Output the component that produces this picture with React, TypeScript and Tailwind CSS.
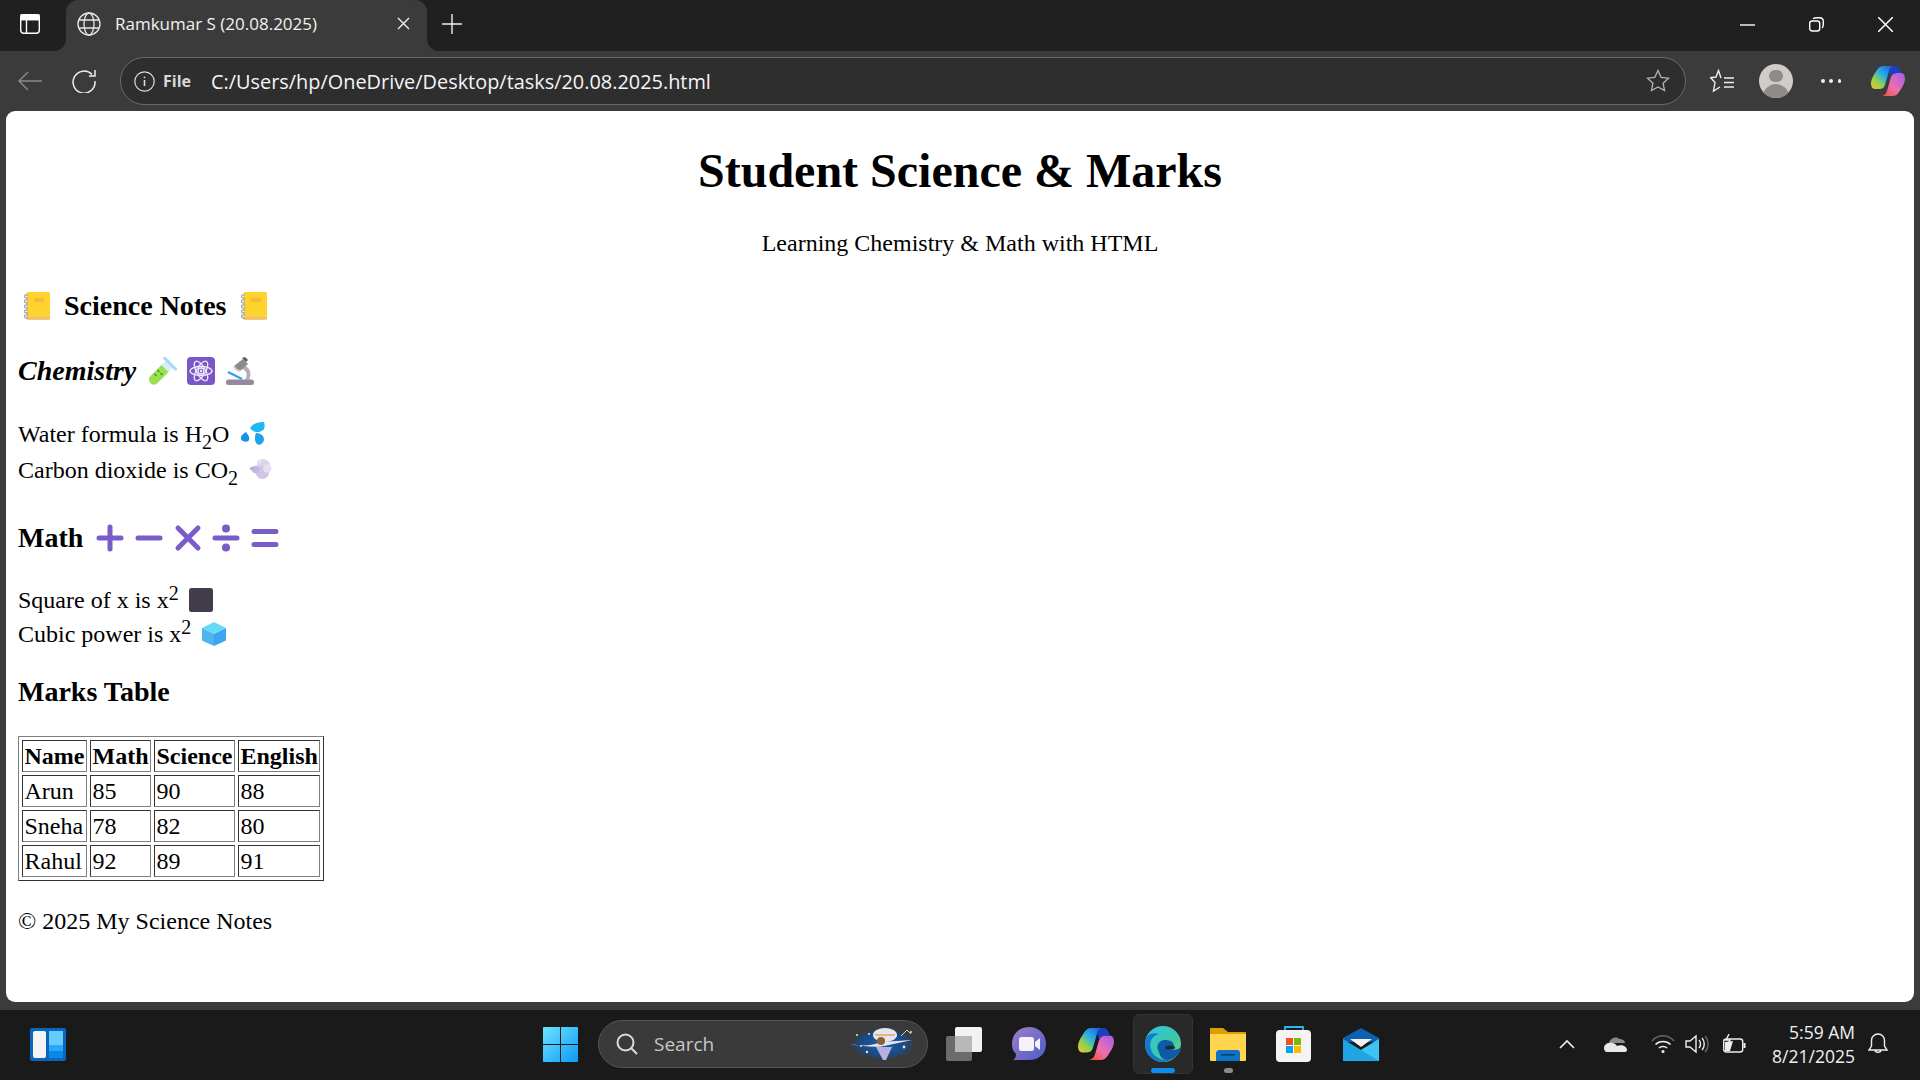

import React from "react";

const ui = { fontFamily: '"Open Sans", "Noto Sans", sans-serif' };
const serif = { fontFamily: '"Liberation Serif", serif' };

function Copilot({ s = 34, id }: { s?: number; id: string }) {
  return (
    <svg width={s} height={s} viewBox="0 0 34 32" className="shrink-0">
      <defs>
        <linearGradient id={id + "a"} x1="0" y1="1" x2="1" y2="0">
          <stop offset="0" stopColor="#f7c32e" /><stop offset=".3" stopColor="#8fd14f" /><stop offset=".55" stopColor="#27b0e8" /><stop offset="1" stopColor="#1a4fd8" />
        </linearGradient>
        <linearGradient id={id + "b"} x1="0" y1="1" x2="1" y2="0">
          <stop offset="0" stopColor="#f0502a" /><stop offset=".45" stopColor="#ee6fb0" /><stop offset="1" stopColor="#a45ce8" />
        </linearGradient>
      </defs>
      <path d="M12 1H24C21 1 19 3 18 6L14 20C13 23 11 24 8 24H4C1 24 0 21 0 18 0 15 2 11 4 8L6 5C8 2 10 1 12 1z" fill={"url(#" + id + "a)"} />
      <path d="M22 31H10C13 31 15 29 16 26L20 12C21 9 23 8 26 8H30C33 8 34 11 34 14 34 17 32 21 30 24L28 27C26 30 24 31 22 31z" fill={"url(#" + id + "b)"} />
      <path d="M18 6C19 3 21 1 24 1c3 0 5 3 6 7h-4c-3 0-5 1-6 4z" fill="#1a3fc8" />
    </svg>
  );
}

function Notebook() {
  return (
    <svg width="26" height="28" viewBox="0 0 26 28" className="inline-block align-[-5px]">
      <rect x="2.500" y="0" width="23.500" height="28" rx="1.500" fill="#ffd32e" />
      <rect x="2.500" y="25" width="23.500" height="2" fill="#e8b8a0" />
      <rect x="10" y="6" width="10" height="4" rx="1" fill="#f8b83a" />
      {[3, 8, 13, 18, 23].map((y) => (
        <path key={y} d={`M4 ${y}C-1 ${y - 1} -1 ${y + 3} 4 ${y + 3}`} fill="none" stroke="#a9a7b2" strokeWidth="1.4" />
      ))}
    </svg>
  );
}
function Tube() {
  return (
    <svg width="29" height="28" viewBox="0 0 28 28" className="inline-block align-[-5px]">
      <path d="M18 3 25 10 9 26c-2 2-5 2-7 0s-2-5 0-7z" fill="#d8eef8" />
      <path d="M13 8 20 15 9 26c-2 2-5 2-7 0s-2-5 0-7z" fill="#9ae04c" />
      <path d="M16 1 27 12" stroke="#a9d9f2" strokeWidth="3" strokeLinecap="round" />
      <path d="M9 13l2 2M12 16l2 2M6 17l2 2" stroke="#3f8f54" strokeWidth="1.4" />
    </svg>
  );
}
function Atom() {
  return (
    <svg width="28" height="28" viewBox="0 0 28 28" className="inline-block align-[-5px]">
      <rect width="28" height="28" rx="4" fill="#7a58c4" />
      <g fill="none" stroke="#efe8fb" strokeWidth="1.3">
        <ellipse cx="14" cy="14" rx="11" ry="4.5" />
        <ellipse cx="14" cy="14" rx="11" ry="4.5" transform="rotate(60 14 14)" />
        <ellipse cx="14" cy="14" rx="11" ry="4.5" transform="rotate(120 14 14)" />
        <circle cx="14" cy="14" r="3" />
      </g>
      <circle cx="14" cy="14" r="1.3" fill="#efe8fb" />
    </svg>
  );
}
function Microscope() {
  return (
    <svg width="28" height="28" viewBox="0 0 28 28" className="inline-block align-[-5px]">
      <rect y="22.500" width="28" height="5.500" rx="2.500" fill="#98889f" />
      <path d="M17 8c7 2 9 8 6 15h-4c3-5 2-9-3-11z" fill="#b3adb8" />
      <path d="M8 9 17 2l5 5-8 7c-2 1-5-2-6-5z" fill="#8e8a90" />
      <path d="M16 1l3-1 3 3-2 2z" fill="#5c5a60" />
      <path d="M2 15l14 7" stroke="#35a3ea" strokeWidth="2.400" />
      <path d="M8 9c0 2 3 5 6 5" fill="none" stroke="#d7d3da" strokeWidth="2" />
    </svg>
  );
}
function Drops() {
  return (
    <svg width="24" height="24" viewBox="0 0 24 24" className="inline-block align-[-4px] ml-[6px]">
      <path d="M9 6C12 1 18 0 23 0c1 3 1 6-1 8-3 3-10 3-13-2z" fill="#1fb8f2" />
      <path d="M5 10c2 3 4 5 3 8-1 3-7 2-8-1-1-3 2-5 5-7z" fill="#1594e6" />
      <path d="M15 11c4 0 8 2 8 7-1 4-5 6-7 4s-3-6-1-11z" fill="#1ba4ec" />
    </svg>
  );
}
function Puff() {
  return (
    <svg width="23" height="23" viewBox="0 0 24 24" className="inline-block align-[-3px] ml-[5px]">
      <g fill="#dcd4ec">
        <circle cx="15" cy="8" r="7" />
        <circle cx="14" cy="15" r="7" fill="#cfc6e6" />
        <circle cx="7" cy="12" r="4" fill="#c3b8e2" />
        <circle cx="3" cy="11" r="2" fill="#b9aadd" />
        <circle cx="19" cy="11" r="4.5" fill="#e4e0ec" />
        <circle cx="11" cy="4" r="2.5" fill="#e5e0ef" />
      </g>
    </svg>
  );
}
function Sym({ d, dots }: { d: string; dots?: boolean }) {
  return (
    <svg width="28" height="28" viewBox="0 0 28 28" className="shrink-0">
      <path d={d} stroke="#7a5cc8" strokeWidth="5" strokeLinecap="round" fill="none" />
      {dots && (<><circle cx="14" cy="4.5" r="4" fill="#7a5cc8" /><circle cx="14" cy="23.5" r="4" fill="#7a5cc8" /></>)}
    </svg>
  );
}
function SquareE() {
  return (
    <svg width="24" height="24" viewBox="0 0 24 24" className="inline-block align-[-4px] ml-[4px]">
      <rect width="24" height="24" rx="2.5" fill="#433d4b" />
    </svg>
  );
}
function Cube() {
  return (
    <svg width="24" height="24" viewBox="0 0 24 24" className="inline-block align-[-4px] ml-[5px]">
      <path d="M12 0 24 6 12 12 0 6z" fill="#64dcf5" />
      <path d="M0 6 12 12V24L1 19c-1 0-1-1-1-2z" fill="#4db4f0" />
      <path d="M24 6 12 12V24l11-5c1 0 1-1 1-2z" fill="#3ca4f4" />
    </svg>
  );
}

function Cell({ children, head }: { children: React.ReactNode; head?: boolean }) {
  const c = "border border-t-[#333333] border-l-[#333333] border-r-[#808080] border-b-[#808080] p-[1.5px] text-left";
  return head ? <th className={c + " text-center font-bold"}>{children}</th> : <td className={c}>{children}</td>;
}

function Edge() {
  return (
    <svg width="36" height="36" viewBox="0 0 36 36">
      <defs>
        <linearGradient id="edgeA" x1="0" y1="0" x2="1" y2="1">
          <stop offset="0" stopColor="#2fc5e8" /><stop offset=".6" stopColor="#3cc8a4" /><stop offset="1" stopColor="#7ee06a" />
        </linearGradient>
      </defs>
      <circle cx="18" cy="18" r="18" fill="url(#edgeA)" />
      <path d="M0 18C0 8 8 6 14 8c-8 2-11 10-7 18 3 6 13 10 20 7-3 2-6 3-9 3C8 36 0 28 0 18z" fill="#1578cf" />
      <path d="M14 26c-4-6 0-12 6-12 5 0 9 2 9 6s-7 2-8 0c2 4 12 6 15 0-1 8-7 14-14 14-4 0-7-3-8-8z" fill="#0e5aa8" />
      <ellipse cx="25" cy="21.5" rx="5" ry="2" fill="#1f2a36" />
    </svg>
  );
}

export default function App() {
  return (
    <div className="w-[1920px] h-[1080px] flex flex-col overflow-hidden bg-[#3b3b3b]" style={ui}>
      {/* tab strip */}
      <div className="h-[51px] shrink-0 bg-[#202020] flex items-stretch text-white">
        <div className="w-[66px] flex items-start justify-start pl-[20px] pt-[14px]">
          <svg width="20" height="20" viewBox="0 0 20 20" fill="none" stroke="#fff" strokeWidth="1.4">
            <rect x=".7" y=".7" width="18.6" height="18.6" rx="3" />
            <path d="M1 5.5h18M6.5 5.5V19" />
            <path d="M1 1h18v4.5H1z" fill="#fff" />
          </svg>
        </div>
        <div className="relative w-[361px] bg-[#3b3b3b] rounded-t-[12px] flex items-start pl-[11px] pt-[12px]">
          <div className="absolute bottom-0 -left-[12px] w-[12px] h-[12px] bg-[#3b3b3b]"><div className="w-full h-full bg-[#202020] rounded-br-[12px]" /></div>
          <div className="absolute bottom-0 -right-[12px] w-[12px] h-[12px] bg-[#3b3b3b]"><div className="w-full h-full bg-[#202020] rounded-bl-[12px]" /></div>
          <svg width="24" height="24" viewBox="0 0 24 24" fill="none" stroke="#e6e6e6" strokeWidth="1.3">
            <circle cx="12" cy="12" r="11" /><ellipse cx="12" cy="12" rx="5" ry="11" />
            <path d="M2 8h20M2 16h20" />
          </svg>
          <span className="ml-[14px] text-[17px] leading-[24px] text-[#f2f2f2] whitespace-nowrap">Ramkumar S (20.08.2025)</span>
          <svg className="ml-auto mr-[17px] mt-[5px]" width="13" height="13" viewBox="0 0 13 13" stroke="#eee" strokeWidth="1.4"><path d="M1 1l11 11M12 1 1 12" /></svg>
        </div>
        <svg className="ml-[15px] mt-[14px]" width="20" height="20" viewBox="0 0 20 20" stroke="#eee" strokeWidth="1.4"><path d="M10 0v20M0 10h20" /></svg>
        <div className="ml-auto flex items-start pt-[17px] text-white">
          <svg width="15" height="15" viewBox="0 0 15 15" stroke="#fff" strokeWidth="1.4"><path d="M0 8h15" /></svg>
          <svg className="ml-[54px]" width="15" height="15" viewBox="0 0 15 15" fill="none" stroke="#fff" strokeWidth="1.4"><rect x=".7" y="4" width="10" height="10" rx="2.5" /><path d="M4 1.7C5 1 6 .7 8 .7h2.5c2.5 0 3.8 1.5 3.8 3.8V7c0 2-.3 3-1 4" /></svg>
          <svg className="ml-[54px] mr-[27px]" width="15" height="15" viewBox="0 0 15 15" stroke="#fff" strokeWidth="1.5"><path d="M0 0l15 15M15 0 0 15" /></svg>
        </div>
      </div>

      {/* toolbar */}
      <div className="h-[60px] shrink-0 flex items-center text-white">
        <svg className="ml-[18px]" width="24" height="20" viewBox="0 0 24 20" fill="none" stroke="#8a8a8a" strokeWidth="1.4"><path d="M24 10H1M10 1l-9 9 9 9" /></svg>
        <svg className="ml-[30px]" width="24" height="24" viewBox="0 0 24 24" fill="none" stroke="#eee" strokeWidth="1.5"><path d="M20 5.5A11 11 0 1 0 23 12M23 1v6h-6" /></svg>
        <div className="ml-[24px] w-[1566px] h-[48px] rounded-full bg-[#2e2e2e] border border-[#6a6a6a] flex items-center pl-[13px] pr-[6px]">
          <svg width="21" height="21" viewBox="0 0 21 21" fill="none" stroke="#ddd" strokeWidth="1.2"><circle cx="10.5" cy="10.5" r="9.7" /><path d="M10.5 9v6" strokeWidth="1.6" /><circle cx="10.5" cy="6.3" r=".9" fill="#ddd" stroke="none" /></svg>
          <span className="ml-[8px] text-[16px] font-bold text-[#d8d8d8]">File</span>
          <span className="ml-[20px] pt-[1px] text-[19.9px] text-[#f5f5f5] whitespace-nowrap">C:/Users/hp/OneDrive/Desktop/tasks/20.08.2025.html</span>
          <svg className="ml-auto mr-[3px]" width="24" height="24" viewBox="0 0 24 24" fill="none" stroke="#b5b5b5" strokeWidth="1.3"><path d="M12 1.5l3.2 6.8 7.3.9-5.4 5 1.4 7.3-6.5-3.6-6.5 3.6L6.900 14.200l-5.400-5 7.300-.9z" /></svg>
          <span className="w-[6px]" />
        </div>
        <svg className="ml-[24px]" width="24" height="24" viewBox="0 0 24 24" fill="none" stroke="#eee" strokeWidth="1.4"><path d="M11 9 8.500 1.500 6 8l-5.300.7L5 13.500 3.500 22l6.500-4M14 9h10M14 13.500h10M14 18h10" /></svg>
        <div className="ml-[25px] w-[34px] h-[34px] rounded-full bg-[#cfcdc9] overflow-hidden flex flex-col items-center">
          <div className="mt-[6px] w-[14px] h-[14px] rounded-full bg-[#8f8b87]" />
          <div className="mt-[2px] w-[26px] h-[16px] rounded-t-full bg-[#8f8b87]" />
        </div>
        <div className="ml-[28px] w-[20px] flex justify-between">
          <i className="w-[3.5px] h-[3.5px] rounded-full bg-[#eee]" /><i className="w-[3.5px] h-[3.5px] rounded-full bg-[#eee]" /><i className="w-[3.5px] h-[3.5px] rounded-full bg-[#eee]" />
        </div>
        <span className="ml-[30px]"><Copilot id="c1" /></span>
      </div>

      {/* page */}
      <div className="h-[891px] shrink-0 mx-[6px] bg-white rounded-[9px] overflow-hidden px-[12px] text-black text-[24px]" style={serif}>
        <h1 className="mt-[32px] mb-[32px] text-[48px] leading-[55px] font-bold text-center">Student Science &amp; Marks</h1>
        <p className="text-center leading-[27px]">Learning Chemistry &amp; Math with HTML</p>
        <h3 className="mt-[33px] mb-[33px] text-[28px] leading-[32px] font-bold pl-[6px] flex items-center whitespace-pre">
          <Notebook /><span className="w-[14px]" />Science Notes<span className="w-[14px]" /><Notebook />
        </h3>
        <h3 className="mt-[33px] mb-[29px] text-[28px] leading-[32px] font-bold italic flex items-center">
          Chemistry<span className="w-[12px]" /><Tube /><span className="w-[10px]" /><Atom /><span className="w-[11px]" /><Microscope />
        </h3>
        <p className="leading-[36px]">Water formula is H<sub className="text-[20px] -bottom-[7px]">2</sub>O <Drops /></p>
        <p className="leading-[36px]">Carbon dioxide is CO<sub className="text-[20px] -bottom-[7px]">2</sub> <Puff /></p>
        <h3 className="mt-[34px] mb-[29px] text-[28px] leading-[32px] font-bold flex items-center">
          Math<span className="w-[13px]" />
          <Sym d="M14 3V25M3 14H25" /><span className="w-[10.7px]" />
          <Sym d="M3 14H25" /><span className="w-[10.7px]" />
          <Sym d="M4 4 24 24M24 4 4 24" /><span className="w-[10.7px]" />
          <Sym d="M3 14H25" dots /><span className="w-[10.7px]" />
          <Sym d="M3 7.500H25M3 20.500H25" />
        </h3>
        <p className="leading-[34px]">Square of x is x<sup className="text-[20px] -top-[8px]">2</sup> <SquareE /></p>
        <p className="leading-[34px]">Cubic power is x<sup className="text-[20px] -top-[8px]">2</sup> <Cube /></p>
        <h3 className="mt-[25px] mb-[28px] text-[28px] leading-[32px] font-bold">Marks Table</h3>
        <table className="border-separate [border-spacing:3px] border border-t-[#808080] border-l-[#808080] border-r-[#333333] border-b-[#333333] leading-[27px]">
          <thead>
            <tr><Cell head>Name</Cell><Cell head>Math</Cell><Cell head>Science</Cell><Cell head>English</Cell></tr>
          </thead>
          <tbody>
            <tr><Cell>Arun</Cell><Cell>85</Cell><Cell>90</Cell><Cell>88</Cell></tr>
            <tr><Cell>Sneha</Cell><Cell>78</Cell><Cell>82</Cell><Cell>80</Cell></tr>
            <tr><Cell>Rahul</Cell><Cell>92</Cell><Cell>89</Cell><Cell>91</Cell></tr>
          </tbody>
        </table>
        <p className="mt-[27px] leading-[27px]">© 2025 My Science Notes</p>
      </div>

      <div className="h-[8px] shrink-0" />

      {/* taskbar */}
      <div className="h-[70px] shrink-0 bg-[#1a1a1a] flex items-center pb-[2px] text-white">
        <svg className="ml-[30px]" width="36" height="33" viewBox="0 0 36 33">
          <rect width="36" height="33" rx="2" fill="#0a66bd" />
          <rect x="3" y="3" width="13" height="27" rx="2" fill="#f4f4f4" />
          <rect x="19" y="3" width="14" height="14" fill="#66ccff" />
          <rect x="19" y="17" width="14" height="6" fill="#27aaf5" />
          <rect x="19" y="23" width="14" height="7" fill="#0a8ae6" />
        </svg>
        <svg className="ml-[477px]" width="35" height="35" viewBox="0 0 35 35">
          <defs><linearGradient id="win" x1="0" y1="0" x2="1" y2="1"><stop offset="0" stopColor="#6fe3ff" /><stop offset="1" stopColor="#0a9bf5" /></linearGradient></defs>
          <path d="M1 0h16v17H0V1a1 1 0 0 1 1-1zM18 0h16a1 1 0 0 1 1 1v16H18zM0 18h17v17H1a1 1 0 0 1-1-1zM18 18h17v16a1 1 0 0 1-1 1H18z" fill="url(#win)" />
        </svg>
        <div className="ml-[20px] w-[330px] h-[48px] rounded-full bg-[#3a3a3a] border border-[#545454] flex items-center pl-[17px] pr-[12px]">
          <svg width="22" height="22" viewBox="0 0 22 22" fill="none" stroke="#ddd" strokeWidth="2"><circle cx="9.5" cy="9.5" r="8" /><path d="M15.5 15.5 21 21" /></svg>
          <span className="ml-[16px] text-[19px] text-[#c8c8c8]">Search</span>
          <svg className="ml-auto" width="66" height="36" viewBox="0 0 66 36">
            <defs><radialGradient id="sky"><stop offset="0" stopColor="#1e5fa8" /><stop offset=".7" stopColor="#1a4a86" /><stop offset="1" stopColor="#3a3a3a" /></radialGradient></defs>
            <ellipse cx="34" cy="18" rx="32" ry="16" fill="url(#sky)" />
            <ellipse cx="36" cy="9" rx="12" ry="7" fill="#e6e4f2" />
            <path d="M26 9h20" stroke="#d8a94a" strokeWidth="1.4" />
            <path d="M1 18c12 3 24 1 32-2l30-2-28 6c-8 2-22 0-34-2z" fill="#e8e6f0" />
            <path d="M27 21h16l-6 13h-3z" fill="#b5b2e2" />
            <circle cx="32" cy="15" r="4" fill="#8a6230" />
            <path d="M52 10l6-6 4 4" stroke="#ccc" fill="none" />
            <g fill="#f4e8b0"><circle cx="8" cy="9" r="1" /><circle cx="20" cy="8" r="1" /><circle cx="18" cy="26" r="1.2" /><circle cx="55" cy="21" r="1.4" /><circle cx="62" cy="6" r="1" /><circle cx="12" cy="20" r="1" /></g>
          </svg>
        </div>
        <svg className="ml-[18px]" width="36" height="34" viewBox="0 0 36 34">
          <rect x="0" y="9" width="26" height="25" rx="2" fill="#6b6b6b" />
          <rect x="9" y="0" width="27" height="25" rx="2" fill="#f2f2f2" />
          <rect x="9" y="9" width="17" height="16" fill="#b8b8b8" />
        </svg>
        <svg className="ml-[29px]" width="36" height="36" viewBox="0 0 36 36">
          <defs><linearGradient id="meet" x1="0" y1="0" x2="1" y2="1"><stop offset="0" stopColor="#9d7fc8" /><stop offset="1" stopColor="#4d5bc8" /></linearGradient></defs>
          <path d="M18 1c10 0 17 7 17 17s-7 16-17 16H2c2-1 3-3 3-6-3-3-4-6-4-10C1 8 8 1 18 1z" fill="url(#meet)" />
          <rect x="8" y="11" width="15" height="14" rx="2.5" fill="#f4f2fb" />
          <path d="M24 16l5-4v12l-5-4z" fill="#f4f2fb" />
        </svg>
        <span className="ml-[31px]"><Copilot id="c2" s={36} /></span>
        <div className="ml-[19px] w-[60px] h-[60px] rounded-[6px] bg-[#292929] border border-[#333] flex flex-col items-center pt-[11px]">
          <Edge />
          <div className="mt-[6px] w-[24px] h-[5px] rounded-full bg-[#0a8ef0]" />
        </div>
        <div className="ml-[17px] w-[36px] flex flex-col items-center pt-[11px] self-start mt-[7px]">
          <svg width="36" height="33" viewBox="0 0 36 33">
            <path d="M0 1a1 1 0 0 1 1-1h12l5 4h17a1 1 0 0 1 1 1v5H0z" fill="#d9a000" />
            <path d="M0 6h36v26a1 1 0 0 1-1 1H1a1 1 0 0 1-1-1z" fill="#ffd44f" />
            <path d="M6 33V25c0-2 2-3 3-3h18c2 0 3 1 3 3v8z" fill="#0f73c4" />
            <rect x="11" y="26" width="14" height="1.6" fill="#083e78" />
          </svg>
          <div className="mt-[7px] w-[9px] h-[5px] rounded-full bg-[#8a8a8a]" />
        </div>
        <svg className="ml-[30px]" width="36" height="36" viewBox="0 0 36 36">
          <path d="M9 6V1h18v5" fill="none" stroke="#2bb5ee" strokeWidth="1.8" />
          <rect y="4" width="35" height="32" rx="4" fill="#f4f4f4" />
          <rect x="10" y="12" width="7" height="7" fill="#f25022" /><rect x="18" y="12" width="7" height="7" fill="#7fba00" />
          <rect x="10" y="20" width="7" height="7" fill="#00a4ef" /><rect x="18" y="20" width="7" height="7" fill="#ffb900" />
        </svg>
        <svg className="ml-[31px]" width="36" height="33" viewBox="0 0 36 33">
          <path d="M18 0 36 10v4H0v-4z" fill="#0a62b0" />
          <path d="M7 11h22l-11 8z" fill="#f2f2f2" />
          <path d="M0 11l18 11 18-11v22H0z" fill="#1fa4e4" />
          <path d="M36 11v22L18 22z" fill="#3cc4f2" />
        </svg>

        <svg className="ml-[180px]" width="16" height="10" viewBox="0 0 16 10" fill="none" stroke="#eee" strokeWidth="1.6"><path d="M1 9l7-7 7 7" /></svg>
        <svg className="ml-[28px]" width="25" height="16" viewBox="0 0 25 16">
          <path d="M6 7C7 2 14 0 16 3c4 0 6 2 6 4H6z" fill="#8a8a8a" /><path d="M1 12c0-3 3-5 5-5 4-1 7 1 8 3 4-2 10 0 10 4 0 1-1 2-2 2H4c-2 0-3-2-3-4z" fill="#e8e8e8" />
        </svg>
        <svg className="ml-[23px]" width="24" height="20" viewBox="0 0 24 20" fill="none" stroke="#eee" strokeWidth="1.5">
          <path d="M1 7C7 0 17 0 23 7" stroke="#666" /><path d="M4.500 10.500c4-4 11-4 15 0M8 14c2-2 6-2 8 0" /><circle cx="12" cy="17.500" r="1.500" fill="#eee" stroke="none" />
        </svg>
        <svg className="ml-[10px]" width="24" height="20" viewBox="0 0 24 20" fill="none" stroke="#eee" strokeWidth="1.4">
          <path d="M1 7v6h4l6 5V2L5 7z" /><path d="M14 6c2 2 2 6 0 8M17 4c3 3 3 9 0 12" /><path d="M20 2c4 4 4 12 0 16" stroke="#666" />
        </svg>
        <svg className="ml-[14px]" width="24" height="20" viewBox="0 0 24 20" fill="none" stroke="#eee" strokeWidth="1.4">
          <rect x=".7" y="5" width="19" height="13" rx="2.5" /><path d="M21.500 9v5" strokeWidth="2" /><path d="M2 17V8l8-1-3 10z" fill="#eee" stroke="none" /><path d="M6 0 3 6h4L5 10" />
        </svg>
        <div className="ml-[8px] w-[100px] text-right text-[17.5px] leading-[24px] text-[#f0f0f0] whitespace-nowrap">
          <div>5:59 AM</div><div>8/21/2025</div>
        </div>
        <svg className="ml-[13px]" width="20" height="22" viewBox="0 0 20 22" fill="none" stroke="#eee" strokeWidth="1.4">
          <path d="M10 1c-4 0-6.500 3-6.500 6.500V13L1 17h18l-2.500-4V7.500C16.500 4 14 1 10 1zM7 17c0 3 6 3 6 0" />
        </svg>
      </div>
    </div>
  );
}
